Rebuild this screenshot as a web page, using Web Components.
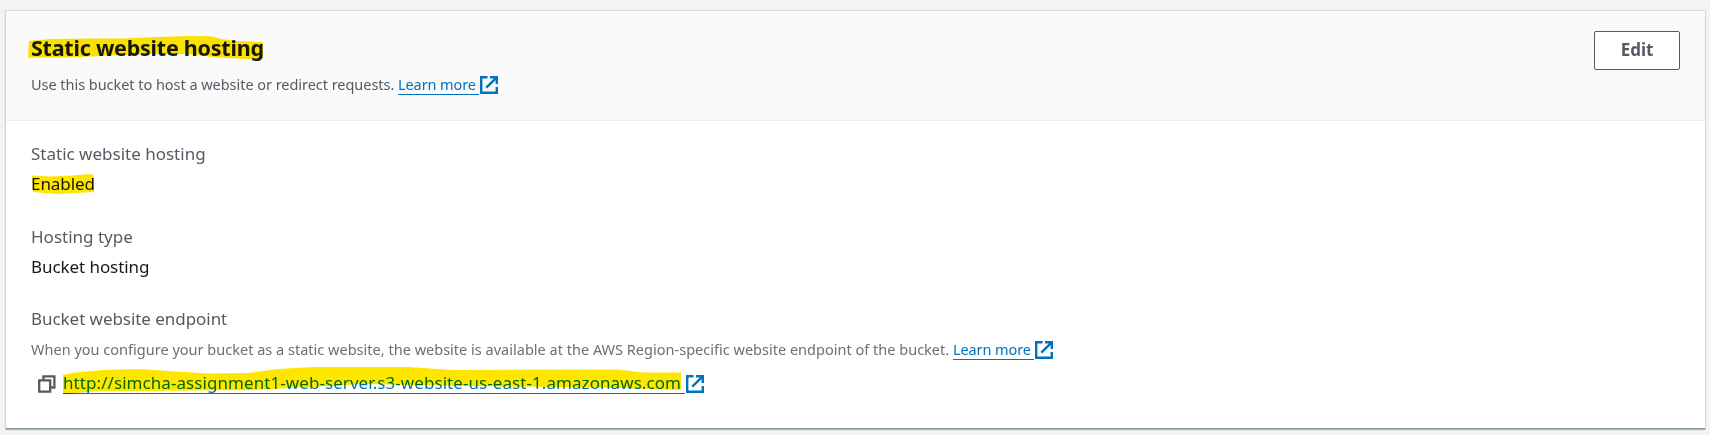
<!DOCTYPE html>
<html lang="en">
<head>
<meta charset="utf-8">
<title>Static website hosting</title>
<style>
html,body{margin:0;height:435px;background:#f2f3f3;overflow:hidden}
body{font-family:"Noto Sans","Open Sans",sans-serif;color:#16191f}
</style>
</head>
<body>
<hosting-panel></hosting-panel>
<script>
const define=(name,html)=>customElements.define(name,class extends HTMLElement{
  constructor(){super();const t=document.createElement('template');t.innerHTML=html;
    this.attachShadow({mode:'open'}).append(t.content.cloneNode(true));}
});

define('external-icon',`<style>:host{display:block;width:18px;height:18px;flex:none;color:#0073bb}svg{display:block}</style>
<svg width="18" height="18" viewBox="0 0 18 18" fill="none" stroke="currentColor" stroke-width="2.4"><path d="M7.5 1.2H1.2V16.8H16.8V11M10 1.2H16.8V8M16.2 1.8L6.3 11.7"/></svg>`);

define('copy-icon',`<style>:host{display:block;width:18px;height:18px;flex:none;color:#545b64}svg{display:block}</style>
<svg width="18" height="18" viewBox="0 0 18 18" fill="none" stroke="currentColor" stroke-width="2.3"><path d="M1.2 5.4H12.2V16.6H1.2ZM5.4 5.4V1.4H16.4V12.5H12.2"/></svg>`);

define('external-link',`<style>:host{display:inline-flex;align-items:flex-start;color:#0073bb}
a{display:block;color:inherit;border-bottom:1px solid #0073bb;box-sizing:border-box;width:var(--w);height:var(--h,21px);white-space:nowrap}
external-icon{margin-left:1px;margin-top:var(--icon-top,2px)}</style>
<a><slot></slot></a><external-icon></external-icon>`);

define('marker-highlight',`<style>:host{display:inline-block;position:relative;white-space:nowrap}
::slotted(svg){position:absolute;left:0;top:var(--mark-top,0);overflow:visible;mix-blend-mode:multiply;pointer-events:none}</style><slot></slot>`);

define('edit-button',`<style>:host{display:block;flex:none}
button{display:flex;align-items:center;justify-content:center;box-sizing:border-box;width:86px;height:39px;margin:0;padding:0 0 2px;border:1px solid #545b64;border-radius:2px;background:#fff;color:#545b64;font:700 17px/24px "Noto Sans",sans-serif}</style>
<button><span><slot></slot></span></button>`);

define('key-value',`<style>:host{display:block;height:83px;--mark-top:-1px}
.k{color:#545b64}.k,.v{display:block;font-size:17px;line-height:24px;white-space:nowrap}.v{margin-top:6px;letter-spacing:-.07px}</style>
<div class="k"><slot name="label"></slot></div><div class="v"><slot></slot></div>`);

define('hosting-panel',`<style>
:host{display:block;box-sizing:border-box;width:1710px;padding:11px 5px 0 6px}
section{width:1699px;height:418px;background:#fff;box-shadow:0 1px 1px #aab7b8,0 0 0 1px #d5dbdb,-1px 0 1px #b8bfbf;box-sizing:border-box;border-bottom:1px solid #879596}
header{display:flex;justify-content:space-between;align-items:flex-start;box-sizing:border-box;height:110px;padding:20px 25px 0;background:#fafafa;border-bottom:1px solid #eaeded}
h2{margin:2px 0 0;font-size:21.5px;line-height:30px;font-weight:700;letter-spacing:-.23px}
.row{display:flex;white-space:nowrap;font-size:14.5px;line-height:20px;color:#545b64}
.sub{margin-top:11px}
.sub .t{letter-spacing:-.04px}
.body{padding:21px 25px 0}
.ep{margin-top:-1px;font-size:17px;line-height:24px;color:#545b64;letter-spacing:-.05px}
.desc{margin-top:8px;color:#687078}
.desc .t{letter-spacing:.011px}
.url{margin-top:11px;padding-left:7px;font-size:17px;line-height:24px}
.url marker-highlight{letter-spacing:.068px}
copy-icon{margin:4px 7px 0 0}
.url external-link{--h:23px;--icon-top:4px;--w:622px}
.learn{--w:81px;letter-spacing:-.09px}
</style>
<section>
<header><div>
<h2><marker-highlight><span>Static website hosting</span><svg width="235" height="28"><path fill="#ffe600" d="M-2 8L2 7.5 20 6 60 5.5 95 5.5 125 4 160 3 180 3.3 190 6 205 8 232 9V25L215 26 185 24.5 170 22.5 155 21 120 21 90 22 60 23.5 35 24.5H-3Z"/></svg></marker-highlight></h2>
<div class="row sub"><span class="t">Use this bucket to host a website or redirect requests.&nbsp;</span><external-link class="learn">Learn more</external-link></div>
</div><edit-button>Edit</edit-button></header>
<div class="body">
<key-value><span slot="label">Static website hosting</span><marker-highlight><span>Enabled</span><svg width="64" height="24"><path fill="#ffe600" d="M1 4.5L20 5.5 40 4.5 61 3 63 5V21L45 22 25 23 2 21Z"/></svg></marker-highlight></key-value>
<key-value><span slot="label">Hosting type</span>Bucket hosting</key-value>
<div class="ep">Bucket website endpoint</div>
<div class="row desc"><span class="t">When you configure your bucket as a static website, the website is available at the AWS Region-specific website endpoint of the bucket.&nbsp;</span><external-link class="learn">Learn more</external-link></div>
<div class="row url"><copy-icon></copy-icon><external-link><marker-highlight><span>http://simcha-assignment1-web-server.s3-website-us-east-1.amazonaws.com</span><svg width="620" height="24"><path fill="#ffe600" d="M0 4L12 1.5 40-1 75-2 105 0 145 2.5 185 2 215-2 250-4H345L360-3 390-1 555-1.5 580 1.5H618V19L560 17 500 16 410 15 300 13 190 19 80 20 35 20 5 23H0Z"/></svg></marker-highlight></external-link></div>
</div></section>`);
</script>
</body>
</html>
